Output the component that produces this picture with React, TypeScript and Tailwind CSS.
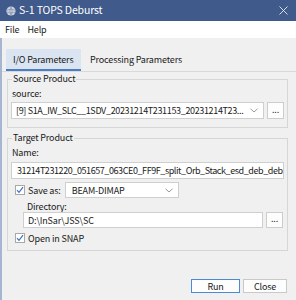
import React from "react";

const font = { fontFamily: '"Noto Sans CJK SC", "Noto Sans", sans-serif', letterSpacing: "-0.15px" };

function Chevron() {
  return (
    <svg width="8" height="5" viewBox="0 0 8 5" className="shrink-0">
      <path d="M0.5 0.8 L4 4 L7.5 0.8" fill="none" stroke="#9a9a9a" strokeWidth="1" />
    </svg>
  );
}

function Check() {
  return (
    <div className="w-[10px] h-[10px] bg-white border border-[#a9a9a9] flex items-center justify-center shrink-0">
      <svg width="8" height="8" viewBox="0 0 8 8">
        <path d="M1 4.2 L3 6.3 L7 1.2" fill="none" stroke="#3b6fc4" strokeWidth="1.2" />
      </svg>
    </div>
  );
}

function Dots({ cls }: { cls: string }) {
  return (
    <div className={`bg-[#fdfdfd] border border-[#cdcdcd] flex items-center justify-center text-[9px] text-[#333] leading-none pb-[3px] shrink-0 ${cls}`}>
      ...
    </div>
  );
}

export default function App() {
  return (
    <div className="w-[296px] h-[300px] bg-[#f0f0f0] flex flex-col overflow-hidden text-[#1a1a1a] text-[9px]" style={font}>
      {/* Title bar */}
      <div className="h-[21px] bg-[#405a8b] flex items-center shrink-0">
        <svg width="10" height="10" viewBox="0 0 10 10" className="ml-[6px]">
          <circle cx="5" cy="5" r="4.6" fill="#c9d2e0" />
          <path d="M1 4 Q5 2.5 9 4 M1 6.3 Q5 7.6 9 6.3 M5 0.5 Q2.6 5 5 9.5 M5 0.5 Q7.4 5 5 9.5" fill="none" stroke="#8592aa" strokeWidth="0.7" />
        </svg>
        <span className="ml-[3px] text-white text-[10.5px] leading-none whitespace-nowrap">S-1 TOPS Deburst</span>
        <div className="flex-1" />
        <svg width="9" height="9" viewBox="0 0 9 9" className="mr-[8px]">
          <path d="M0.5 0.5 L8.5 8.5 M8.5 0.5 L0.5 8.5" stroke="#e8ecf4" strokeWidth="0.9" />
        </svg>
      </div>
      {/* Menu */}
      <div className="h-[17px] bg-white flex items-center leading-none shrink-0 gap-[8px] pl-[5px]">
        <span>File</span>
        <span>Help</span>
      </div>
      {/* Body */}
      <div className="flex-1 flex border-l-2 border-[#a6b5d0]">
        <div className="flex-1 flex flex-col">
          {/* Tabs */}
          <div className="mt-[11px] flex border-b border-[#d9d9d9] leading-none h-[23px] whitespace-nowrap">
            <div className="ml-[4px] w-[75px] bg-[#dae5f1] border-b-2 border-[#4c7cc6] flex items-center pl-[7px]">
              I/O Parameters
            </div>
            <div className="flex items-center pl-[9px] pb-[2px]">Processing Parameters</div>
          </div>
          {/* Source Product */}
          <div className="relative ml-[5px] mt-[7px] w-[281px] border border-[#d6d6d6] px-[3px] pt-[8px] pb-[8px]">
            <span className="absolute left-[4px] -top-[7px] bg-[#f0f0f0] px-[1px] leading-[12px] whitespace-nowrap">Source Product</span>
            <div className="pl-[1px] leading-[12px] h-[12px]">source:</div>
            <div className="mt-[2px] flex gap-[3px] h-[17px]">
              <div className="w-[254px] bg-white border border-[#cfcfcf] flex items-center pl-[4px] pr-[5px] leading-[14px]">
                <span className="flex-1 whitespace-nowrap tracking-[-0.35px]">[9] S1A_IW_SLC__1SDV_20231214T231153_20231214T23...</span>
                <Chevron />
              </div>
              <Dots cls="w-[17px]" />
            </div>
          </div>
          {/* Target Product */}
          <div className="relative ml-[5px] mt-[10px] w-[281px] border border-[#d6d6d6] px-[3px] pt-[8px] pb-[6px]">
            <span className="absolute left-[4px] -top-[7px] bg-[#f0f0f0] px-[1px] leading-[12px] whitespace-nowrap">Target Product</span>
            <div className="pl-[1px] leading-[12px] h-[12px]">Name:</div>
            <div className="mt-[3px] h-[17px] bg-white border border-[#cfcfcf] flex items-center pl-[5px] leading-[14px] whitespace-nowrap overflow-hidden tracking-[-0.42px]">
              31214T231220_051657_063CE0_FF9F_split_Orb_Stack_esd_deb_deb
            </div>
            <div className="mt-[3px] h-[16px] flex items-center pl-[4px]">
              <Check />
              <span className="ml-[3px] leading-none whitespace-nowrap">Save as:</span>
              <div className="ml-[4px] w-[114px] h-[16px] bg-white border border-[#cfcfcf] flex items-center pl-[6px] pr-[5px] leading-none">
                <span className="flex-1">BEAM-DIMAP</span>
                <Chevron />
              </div>
            </div>
            <div className="pl-[16px] mt-[3px] leading-[11px] h-[11px]">Directory:</div>
            <div className="ml-[12px] flex gap-[3px] h-[16px]">
              <div className="w-[240px] bg-white border border-[#cfcfcf] flex items-center pl-[4px] leading-none">
                D:\InSar\JSS\SC
              </div>
              <Dots cls="w-[17px]" />
            </div>
            <div className="mt-[4px] h-[12px] flex items-center pl-[4px]">
              <Check />
              <span className="ml-[3px] leading-none whitespace-nowrap">Open in SNAP</span>
            </div>
          </div>
          {/* Buttons */}
          <div className="mt-[28px] flex justify-end gap-[3px] pr-[9px] leading-none">
            <div className="w-[49px] h-[14px] bg-[#fdfdfd] border border-[#4a8ad6] flex items-center justify-center">Run</div>
            <div className="w-[44px] h-[14px] bg-[#fdfdfd] border border-[#c9c9c9] flex items-center justify-center">Close</div>
          </div>
        </div>
      </div>
    </div>
  );
}
